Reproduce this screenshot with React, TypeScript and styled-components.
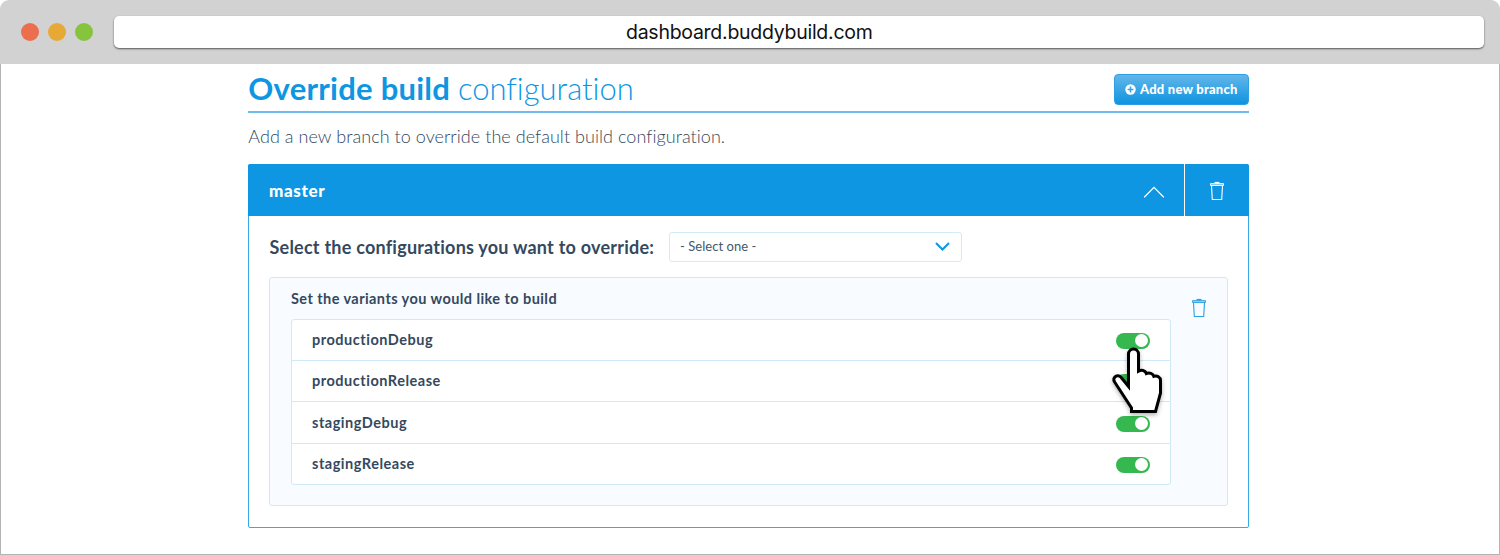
import React, { useState } from "react";
import styled, { createGlobalStyle } from "styled-components";

const Global = createGlobalStyle`
  * { box-sizing: border-box; }
  body {
    margin: 0;
    background: #fff;
    font-family: Lato, "Open Sans", sans-serif;
    font-variant-ligatures: none;
    color: #34495e;
  }
  h1, h2, p { margin: 0; }
  button { font: inherit; border: 0; padding: 0; background: none; cursor: pointer; }
`;

const Window = styled.div`
  height: 555px;
  overflow: hidden;
`;

const TitleBar = styled.header`
  height: 64px;
  display: flex;
  align-items: flex-start;
  padding: 16px 16px 0 21px;
  background: #d2d2d2;
  border-radius: 9px 9px 0 0;
`;

const Lights = styled.div`
  display: flex;
  gap: 9px;
  margin: 7px 20.5px 0 0;
`;

const Light = styled.span<{ $color: string }>`
  width: 18px;
  height: 18px;
  border-radius: 50%;
  background: ${(p) => p.$color};
`;

const Address = styled.div`
  flex: 1;
  height: 32px;
  padding-right: 99px;
  border-radius: 5px;
  background: #fff;
  box-shadow: 0 1px 2px rgba(0, 0, 0, 0.6);
  text-align: center;
  font: 400 19.5px/33px Inter, sans-serif;
  letter-spacing: -0.27px;
  color: #111;
`;

const Viewport = styled.main`
  height: 491px;
  border: 1px solid #b4b4b4;
  border-top: 0;
  padding: 10px 250.5px 0 247.3px;
`;

const Heading = styled.div`
  height: 39px;
  display: flex;
  justify-content: space-between;
  align-items: flex-start;
  border-bottom: 2px solid #6dbdec;
`;

const Title = styled.h1`
  font-size: 31px;
  line-height: 30px;
  margin-top: -1px;
  font-weight: 700;
  letter-spacing: 0.25px;
  color: #0e96e2;
  white-space: nowrap;
`;

const TitleLight = styled.span`
  font-weight: 300;
  letter-spacing: -0.03px;
`;

const AddButton = styled.button`
  width: 134.5px;
  height: 30.5px;
  display: flex;
  align-items: center;
  gap: 4px;
  padding: 0 0 0 10px;
  border: 1px solid #2d9fe3;
  border-radius: 4px;
  background: linear-gradient(#62b6ea, #0e94e0);
  color: #fff;
  font-size: 13px;
  font-weight: 900;
  letter-spacing: 0.22px;
  white-space: nowrap;
`;

const Intro = styled.p`
  height: 51px;
  padding-top: 10px;
  font-size: 18px;
  line-height: 26px;
  font-weight: 300;
  letter-spacing: 0.05px;
  white-space: nowrap;
`;

const Panel = styled.section`
  height: 363.6px;
  border: 1px solid #3aa8e6;
  border-radius: 2px;
`;

const PanelHead = styled.div`
  height: 52.3px;
  margin: -1px -1px 0;
  display: flex;
  align-items: stretch;
  background: #0e96e2;
  border-radius: 2px 2px 0 0;
  color: #fff;
`;

const Branch = styled.h2`
  flex: 1;
  padding-left: 20.7px;
  font-size: 17px;
  line-height: 53px;
  font-weight: 900;
  letter-spacing: 0.65px;
`;

const HeadAction = styled.button<{ $width: number; $divided?: boolean }>`
  width: ${(p) => p.$width}px;
  display: flex;
  align-items: center;
  justify-content: center;
  padding-top: 1px;
  color: #fff;
  border-left: ${(p) => (p.$divided ? "1px solid #fff" : "0")};
`;

const PanelBody = styled.div`
  padding: 15.7px 20px 0 20.2px;
`;

const Picker = styled.div`
  display: flex;
  align-items: center;
  height: 30px;
`;

const PickerLabel = styled.span`
  width: 399.5px;
  font-size: 18px;
  font-weight: 700;
  letter-spacing: 0.23px;
  white-space: nowrap;
`;

const Select = styled.button`
  width: 293px;
  height: 30px;
  display: flex;
  align-items: center;
  justify-content: space-between;
  padding: 0 11px 1px 10px;
  border: 1px solid #d3ebf9;
  border-radius: 3px;
  color: #45586b;
  font-size: 13px;
  letter-spacing: 0.05px;
`;

const Variants = styled.div`
  display: flex;
  justify-content: space-between;
  height: 229px;
  margin-top: 15px;
  padding: 0 20px 0 20.5px;
  border: 1px solid #cfe9f9;
  border-radius: 3px;
  background: #f8fbff;
`;

const VariantsMain = styled.div`
  width: 880px;
`;

const VariantsTitle = styled.h2`
  height: 40.6px;
  font-size: 14.5px;
  line-height: 41px;
  font-weight: 700;
  letter-spacing: 0.43px;
`;

const List = styled.div`
  border: 1px solid #cfe9f9;
  border-radius: 3px;
  background: #fff;
`;

const Row = styled.div`
  height: 40.4px;
  display: flex;
  align-items: center;
  justify-content: space-between;
  padding: 0 20px;
  font-size: 14.5px;
  line-height: 18px;
  font-weight: 700;
  letter-spacing: 0.52px;
  & + & {
    height: 41.4px;
    border-top: 1px solid #cfe9f9;
  }
`;

const RowName = styled.span`
  margin-top: 0.6px;
`;

const Toggle = styled.button<{ $on: boolean }>`
  width: 34px;
  height: 16px;
  display: flex;
  align-items: center;
  justify-content: ${(p) => (p.$on ? "flex-end" : "flex-start")};
  margin-top: 2px;
  padding: 0 2px;
  border-radius: 8px;
  background: ${(p) => (p.$on ? "#35b850" : "#ccd5dc")};
`;

const Knob = styled.span`
  width: 13px;
  height: 13px;
  border-radius: 50%;
  background: #fff;
`;

const RemoveButton = styled.button`
  height: 20px;
  margin-top: 19.6px;
  color: #2b9fe2;
`;

const Pointer = styled.svg`
  position: absolute;
  left: 1106px;
  top: 342px;
  pointer-events: none;
  filter: drop-shadow(0 2px 2px rgba(0, 0, 0, 0.3));
`;

const Trash = () => (
  <svg width="16" height="20" viewBox="0 0 16 20" fill="none" stroke="currentColor" strokeWidth="1.1">
    <path d="M1.500 2.600h13v1.900h-13z" fill="currentColor" fillOpacity="0.45" strokeWidth="0.9" />
    <path d="M5.600 1.600h4.800" strokeWidth="1.400" />
    <path d="M2.500 4.500l.8 14h9.400l.8-14" />
  </svg>
);

const names = ["productionDebug", "productionRelease", "stagingDebug", "stagingRelease"];

export default function App() {
  const [on, setOn] = useState<boolean[]>(names.map(() => true));
  return (
    <Window>
      <Global />
      <TitleBar>
        <Lights>
          <Light $color="#eb6e4d" />
          <Light $color="#e7a935" />
          <Light $color="#85c43c" />
        </Lights>
        <Address>dashboard.buddybuild.com</Address>
      </TitleBar>
      <Viewport>
        <Heading>
          <Title>Override build <TitleLight>configuration</TitleLight></Title>
          <AddButton>
            <svg width="11" height="11" viewBox="0 0 11 11">
              <circle cx="5.5" cy="5.5" r="5.2" fill="#fff" />
              <path d="M5.5 2.6v5.8M2.6 5.5h5.8" stroke="#3ca4e5" strokeWidth="1.6" />
            </svg>
            Add new branch
          </AddButton>
        </Heading>
        <Intro>Add a new branch to override the default build configuration.</Intro>
        <Panel>
          <PanelHead>
            <Branch>master</Branch>
            <HeadAction $width={61}>
              <svg width="22" height="14" viewBox="0 0 22 14" fill="none" stroke="#fff" strokeWidth="1.3">
                <path d="M1.200 13.200L11 3.400l9.800 9.800" />
              </svg>
            </HeadAction>
            <HeadAction $width={64.5} $divided><Trash /></HeadAction>
          </PanelHead>
          <PanelBody>
            <Picker>
              <PickerLabel>Select the configurations you want to override:</PickerLabel>
              <Select>
                - Select one -
                <svg width="15" height="10" viewBox="0 0 15 10" fill="none" stroke="#0e96e2" strokeWidth="2">
                  <path d="M1 2l6.500 6.500L14 2" />
                </svg>
              </Select>
            </Picker>
            <Variants>
              <VariantsMain>
                <VariantsTitle>Set the variants you would like to build</VariantsTitle>
                <List>
                  {names.map((name, i) => (
                    <Row key={name}>
                      <RowName>{name}</RowName>
                      <Toggle $on={on[i]} aria-label={name} onClick={() => setOn(on.map((v, j) => (j === i ? !v : v)))}>
                        <Knob />
                      </Toggle>
                    </Row>
                  ))}
                </List>
              </VariantsMain>
              <RemoveButton aria-label="Remove"><Trash /></RemoveButton>
            </Variants>
          </PanelBody>
        </Panel>
      </Viewport>
      <Pointer width="62" height="76" viewBox="0 0 62 76">
        <path
          d="M22.500 44.500V12a5 5 0 0 1 10 0v17.200c3-1.700 6.800-.8 7.800 2.300c3.200-1.200 6.500 0 7.500 2.800c3.500-1 6.700.7 6.700 4.200v12.500L49.500 69.500H25.500v-3.500L8.600 40c-3-4.500 3-8.500 6.600-4.500z"
          fill="#fff" stroke="#000" strokeWidth="3"
        />
      </Pointer>
    </Window>
  );
}
